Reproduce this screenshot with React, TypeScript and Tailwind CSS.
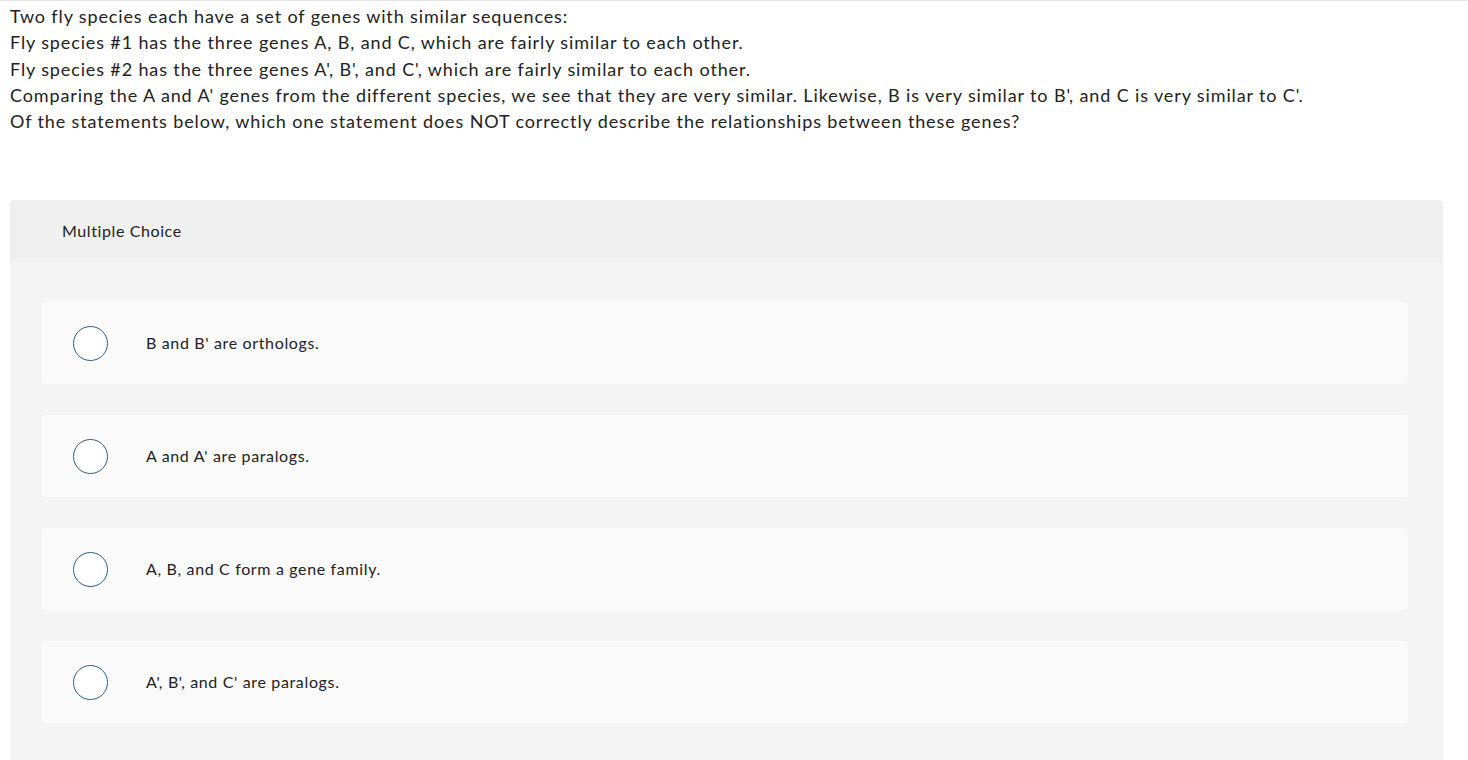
import React from "react";

const options = [
  "B and B' are orthologs.",
  "A and A' are paralogs.",
  "A, B, and C form a gene family.",
  "A', B', and C' are paralogs.",
];

export default function App() {
  return (
    <div className="min-h-screen bg-white border-t border-[#e6e6e6]" style={{ fontFamily: "Lato, 'Open Sans', sans-serif" }}>
      <div className="px-[10px] pt-[2px] text-[18px] leading-[26.3px] tracking-[0.87px] text-[#222]">
        <p>Two fly species each have a set of genes with similar sequences:</p>
        <p>Fly species #1 has the three genes A, B, and C, which are fairly similar to each other.</p>
        <p>Fly species #2 has the three genes A', B', and C', which are fairly similar to each other.</p>
        <p>Comparing the A and A' genes from the different species, we see that they are very similar. Likewise, B is very similar to B', and C is very similar to C'.</p>
        <p>Of the statements below, which one statement does NOT correctly describe the relationships between these genes?</p>
      </div>
      <div className="ml-[10px] mr-[25px] mt-[66px] rounded-t-[4px] bg-[#f4f4f4] overflow-hidden">
        <div className="h-[62px] bg-[#f0f0f0] flex items-center pl-[52px] text-[16px] tracking-[0.6px] text-[#222]">
          Multiple Choice
        </div>
        <div className="pt-[40px] pb-[40px] pl-[32px] pr-[35px] flex flex-col gap-[31px]">
          {options.map((o) => (
            <div key={o} className="h-[82px] bg-[#fafafa] rounded-[4px] flex items-center">
              <div className="ml-[31px] w-[35px] h-[35px] rounded-full border-[1.5px] border-[#2f5b86] bg-white shrink-0" />
              <div className="ml-[38px] text-[16px] tracking-[0.65px] text-[#222]">{o}</div>
            </div>
          ))}
        </div>
      </div>
    </div>
  );
}
